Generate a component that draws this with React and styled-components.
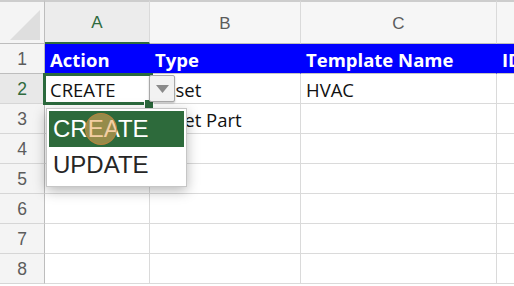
import React from 'react';
import styled, { createGlobalStyle, css } from 'styled-components';

const Global = createGlobalStyle`
  html, body { margin: 0; padding: 0; background: #fff; overflow: hidden; }
  #root { width: 514px; height: 286px; }
`;

const Sheet = styled.div`
  position: relative;
  display: grid;
  grid-template-columns: 45px 105px 151px 196px 120px;
  grid-template-rows: 44px repeat(8, 30px) 1fr;
  width: 514px;
  height: 286px;
  overflow: hidden;
  background: #fff;
`;

const Corner = styled.div`
  position: relative;
  background: #f4f4f4;
  border-top: 2px solid #cdcdcd;
  border-right: 1px solid #bdbdbd;
  border-bottom: 1px solid #bdbdbd;
  &::after {
    content: '';
    position: absolute;
    right: 4px;
    bottom: 3px;
    width: 30px;
    height: 30px;
    background: #dedede;
    clip-path: polygon(100% 0, 100% 100%, 0 100%);
  }
`;

const ColHead = styled.div`
  display: flex;
  align-items: center;
  justify-content: center;
  background: ${p => (p.$active ? '#ececec' : '#f6f6f6')};
  border-top: 2px solid #cdcdcd;
  border-right: 1px solid #dadada;
  border-bottom: ${p => (p.$active ? '2px solid #2f6b3e' : '1px solid #bdbdbd')};
  font-family: 'Liberation Sans', Arial, sans-serif;
  font-size: 17px;
  color: ${p => (p.$active ? '#2f6b3e' : '#5c5c5c')};
  padding-top: 2px;
`;

const RowHead = styled.div`
  display: flex;
  align-items: center;
  justify-content: center;
  background: ${p => (p.$active ? '#e8e8e8' : '#f4f4f4')};
  border-right: 1px solid #bdbdbd;
  border-bottom: 1px solid ${p => (p.$first ? '#bdbdbd' : '#d6d6d6')};
  font-family: 'Liberation Sans', Arial, sans-serif;
  font-size: 17.5px;
  color: ${p => (p.$active ? '#2f6b3e' : '#5c5c5c')};
  padding-top: 1px;
`;

const Cell = styled.div`
  display: flex;
  align-items: center;
  padding: 1px 0 0 5px;
  white-space: nowrap;
  overflow: hidden;
  font-family: 'Open Sans', sans-serif;
  font-size: 18.5px;
  color: #111;
  border-right: 1px solid #dadada;
  border-bottom: 1px solid #dadada;
  ${p =>
    p.$header &&
    css`
      background: #0000ff;
      color: #fff;
      font-weight: 700;
      border-right-color: #0000ff;
      border-bottom-color: #c4c4c4;
    `}
`;

const Filler = styled.div`
  grid-column: 1 / -1;
`;

const Selection = styled.div`
  position: absolute;
  left: 43px;
  top: 73px;
  width: 110px;
  height: 32px;
  box-sizing: border-box;
  border: 3px solid #2b6a3d;
`;

const FillHandle = styled.div`
  position: absolute;
  left: 145px;
  top: 100px;
  width: 8px;
  height: 8px;
  background: #2b6a3d;
  box-shadow: 0 0 0 1px #fff;
`;

const DropButton = styled.div`
  position: absolute;
  left: 149px;
  top: 75px;
  width: 26px;
  height: 27px;
  box-sizing: border-box;
  background: #f2f2f2;
  border: 1px solid #a8a8a8;
  border-radius: 2px;
  box-shadow: 0 1px 2px rgba(0, 0, 0, 0.25);
  display: flex;
  align-items: center;
  justify-content: center;
`;

const DropList = styled.div`
  position: absolute;
  left: 46px;
  top: 108px;
  width: 141px;
  height: 79px;
  box-sizing: border-box;
  padding: 2px;
  background: #fff;
  border: 1px solid #c6c6c6;
  box-shadow: 0 4px 12px rgba(0, 0, 0, 0.28);
  display: flex;
  flex-direction: column;
`;

const Option = styled.div`
  height: ${p => (p.$selected ? '36px' : '38px')};
  display: flex;
  align-items: center;
  padding-left: 4px;
  font-family: 'Liberation Sans', Arial, sans-serif;
  font-size: 24px;
  background: ${p => (p.$selected ? '#2d6a3b' : 'transparent')};
  color: ${p => (p.$selected ? '#fff' : '#262626')};
`;

const Cursor = styled.div`
  position: absolute;
  left: 85px;
  top: 113px;
  width: 32px;
  height: 32px;
  box-sizing: border-box;
  border-radius: 50%;
  background: rgba(235, 165, 85, 0.55);
  border: 1.5px solid rgba(190, 130, 60, 0.85);
`;

const cols = ['A', 'B', 'C', 'D'];
const rows = [
  ['Action', 'Type', 'Template Name', 'ID'],
  ['CREATE', 'Asset', 'HVAC', ''],
  ['', 'Asset Part', '', ''],
  ['', '', '', ''],
  ['', '', '', ''],
  ['', '', '', ''],
  ['', '', '', ''],
  ['', '', '', ''],
];

export default function App() {
  return (
    <>
      <Global />
      <Sheet>
        <Corner />
        {cols.map((c, i) => (
          <ColHead key={c} $active={i === 0}>
            {c}
          </ColHead>
        ))}
        {rows.map((r, ri) => (
          <React.Fragment key={ri}>
            <RowHead $active={ri === 1} $first={ri === 0}>
              {ri + 1}
            </RowHead>
            {r.map((v, ci) => (
              <Cell key={ci} $header={ri === 0}>
                {v}
              </Cell>
            ))}
          </React.Fragment>
        ))}
        <Filler />
        <Selection />
        <FillHandle />
        <DropButton>
          <svg width="13" height="8" viewBox="0 0 13 8">
            <path d="M0 0 H13 L6.5 8 Z" fill="#8a8a8a" />
          </svg>
        </DropButton>
        <DropList>
          <Option $selected>CREATE</Option>
          <Option>UPDATE</Option>
        </DropList>
        <Cursor />
      </Sheet>
    </>
  );
}
